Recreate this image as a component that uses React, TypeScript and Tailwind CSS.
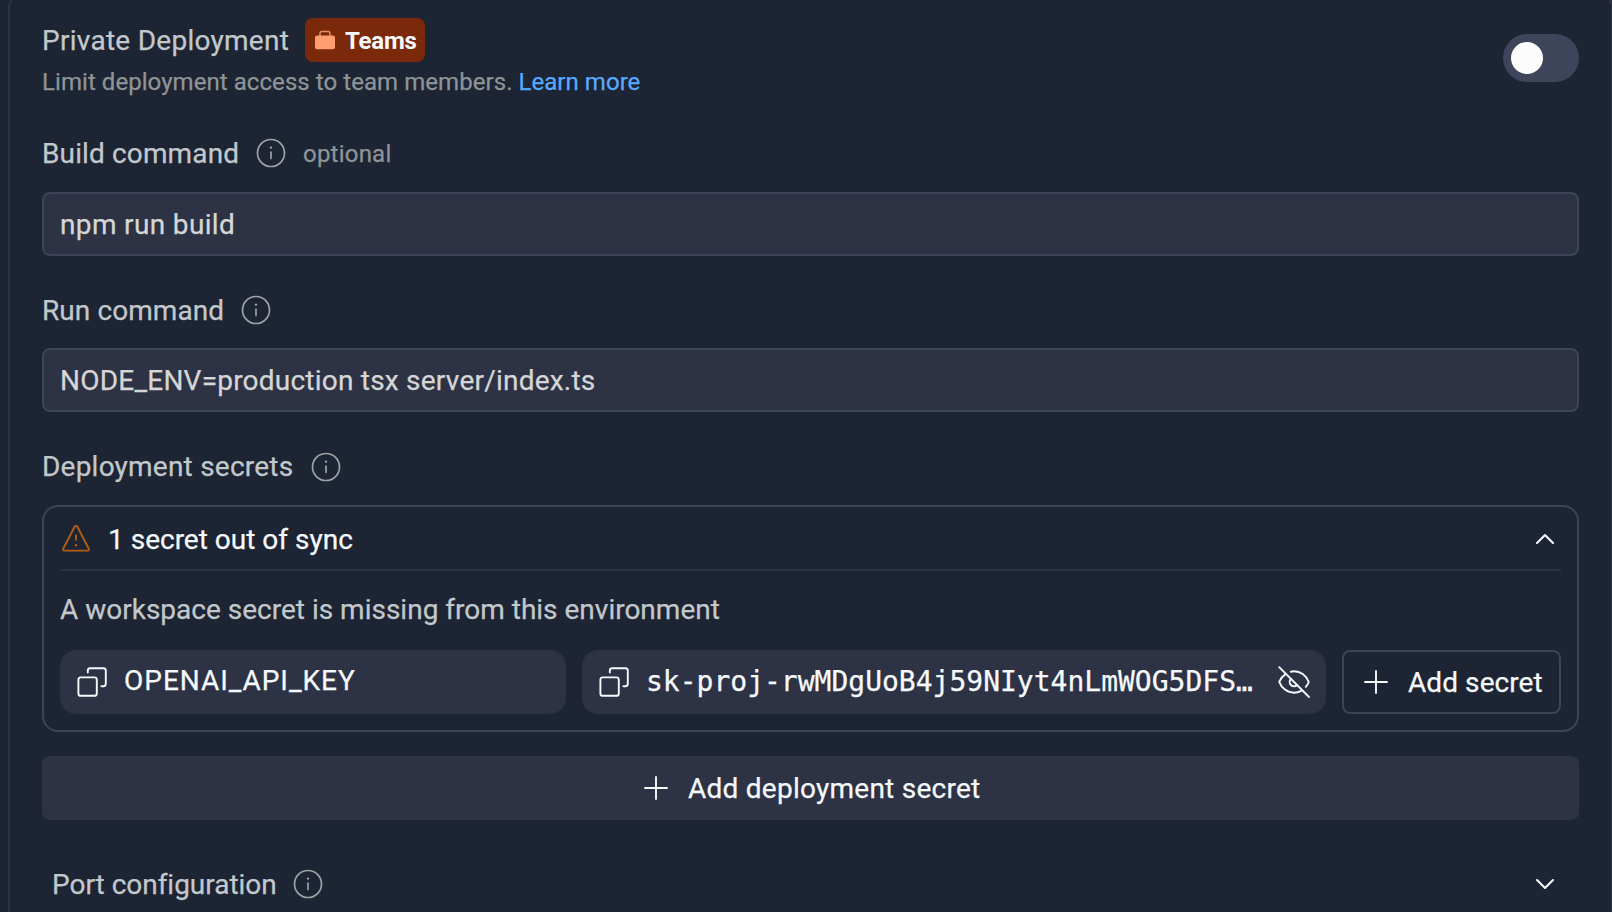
import type { ReactNode } from "react";

type IconProps = { className?: string };

function Icon({ className = "", children, stroke = 1.9 }: IconProps & { children: ReactNode; stroke?: number }) {
  return (
    <svg
      viewBox="0 0 32 32"
      fill="none"
      stroke="currentColor"
      strokeWidth={stroke}
      strokeLinecap="round"
      strokeLinejoin="round"
      className={`size-8 shrink-0 ${className}`}
      aria-hidden="true"
    >
      {children}
    </svg>
  );
}

function InfoIcon() {
  return (
    <Icon className="text-[#9da2a6]" stroke={1.7}>
      <circle cx="16" cy="16" r="13.5" />
      <path d="M16 15.2v6.3" />
      <circle cx="16" cy="10.6" r="1.2" fill="currentColor" stroke="none" />
    </Icon>
  );
}

function CopyIcon() {
  return (
    <Icon>
      <rect x="2.4" y="11.4" width="18.4" height="18.4" rx="2.4" />
      <path d="M11.8 6.6V4.6a2.4 2.4 0 0 1 2.4-2.4h13.2a2.4 2.4 0 0 1 2.4 2.4v13.2a2.4 2.4 0 0 1-2.4 2.4h-2" />
    </Icon>
  );
}

function PlusIcon() {
  return (
    <Icon>
      <path d="M16 5v22M5 16h22" />
    </Icon>
  );
}

function WarningIcon() {
  return (
    <Icon className="mt-0.5 text-[#b35c14]">
      <path d="M14.6 3.8 3.2 25.8a1.2 1.2 0 0 0 1 1.8h23.6a1.2 1.2 0 0 0 1-1.8L17.4 3.8a1.6 1.6 0 0 0-2.8 0Z" />
      <path d="M16 11.500v6" strokeLinecap="butt" />
      <circle cx="16" cy="22.2" r="1.3" fill="currentColor" stroke="none" />
    </Icon>
  );
}

function EyeOffIcon() {
  return (
    <Icon>
      <path d="M1.2 1.2 31 31" />
      <path d="M7.2 8.4C4.4 10.3 2.3 12.9 1.2 15.9c2.3 6.1 8 10.8 14.8 10.8 2.6 0 5-.6 7.1-1.8" />
      <path d="M12.8 5.7c1-.2 2.1-.4 3.2-.4 6.8 0 12.5 4.5 14.8 10.7-.7 1.8-1.7 3.4-3 4.8" />
      <path d="M12.9 12.8a4.4 4.4 0 1 0 6.3 6.2" />
    </Icon>
  );
}

function BriefcaseIcon() {
  return (
    <svg viewBox="0 0 24 24" className="size-6 shrink-0 text-[#ff9e70]" aria-hidden="true">
      <rect x="2" y="7.600" width="20" height="13.600" rx="2" fill="currentColor" />
      <path
        d="M7 8V5.400A1.800 1.800 0 0 1 8.800 3.600h6.400A1.800 1.800 0 0 1 17 5.400V8"
        fill="none"
        stroke="currentColor"
        strokeWidth="1.5"
        opacity="0.85"
      />
    </svg>
  );
}

function Chevron({ up = false }: { up?: boolean }) {
  return (
    <Icon className="text-[#f5f9fc]" stroke={2.1}>
      <path d={up ? "M8 21 16 13l8 8" : "M8 12 16 20l8-8"} />
    </Icon>
  );
}

function Label({ children, text, aside }: { children: ReactNode; text: string; aside?: ReactNode }) {
  return (
    <div className="flex h-8 items-center gap-4 whitespace-nowrap">
      <span className={`text-[#c2c8cc] ${text}`}>{children}</span>
      <InfoIcon />
      {aside}
    </div>
  );
}

function Field({ children }: { children: ReactNode }) {
  return (
    <div className="flex h-16 items-center rounded-lg border-2 border-[#3c445a] bg-[#2d3245] px-4 pt-0.5 text-[#d6d6d6]">
      {children}
    </div>
  );
}

export default function App() {
  return (
    <main className="h-[912px] w-full overflow-hidden bg-[#1d2433] font-['Roboto','Noto_Sans',sans-serif] text-[28px] leading-8 text-[#f5f9fc] [-webkit-text-stroke:0.25px]">
      <section className="-mt-2 ml-2 h-[960px] w-[1605px] rounded-2xl border-2 border-[#2d3245] px-8">
        <header className="flex justify-between pt-6">
          <div>
            <div className="flex h-11 items-center gap-4">
              <h1 className="w-[247px] whitespace-nowrap pt-0.5 tracking-[0.27px] text-[#c2c8cc]">Private Deployment</h1>
              <span className="flex h-11 w-[120px] items-center gap-2 rounded-lg bg-[#7a2a0b] px-2">
                <BriefcaseIcon />
                <span className="pt-0.5 text-2xl font-bold tracking-[-0.2px] [-webkit-text-stroke:0]">Teams</span>
              </span>
            </div>
            <p className="pt-0.5 text-2xl leading-9 tracking-[0.06px] text-[#8f9497]">
              Limit deployment access to team members.{" "}
              <a className="tracking-[0.04px] text-[#57abff]">Learn more</a>
            </p>
          </div>
          <button
            type="button"
            role="switch"
            aria-checked="false"
            className="mt-4 flex h-12 w-[76px] items-center rounded-full bg-[#3e455a] p-2"
          >
            <span className="size-8 rounded-full bg-[#fcfcfc]" />
          </button>
        </header>

        <div className="mt-[37px]">
          <Label
            text="w-[197px] pt-0.5 tracking-[0.13px]"
            aside={<span className="pt-0.5 text-2xl tracking-[0.22px] text-[#8f9497]">optional</span>}
          >
            Build command
          </Label>
          <div className="mt-[23px]">
            <Field>
              <span className="tracking-[0.35px]">npm run build</span>
            </Field>
          </div>
        </div>

        <div className="mt-[38px]">
          <Label text="w-[182px] pt-0.5 tracking-[0.08px]">Run command</Label>
          <div className="mt-[22px]">
            <Field>
              <span className="tracking-[0.22px]">NODE_ENV=production tsx server/index.ts</span>
            </Field>
          </div>
        </div>

        <div className="mt-[39px]">
          <Label text="w-[252px] tracking-[0.22px]">Deployment secrets</Label>
          <div className="mt-[22px] h-[227px] rounded-2xl border-2 border-[#3c445a] px-4">
            <div className="flex h-16 items-center gap-4 border-b-2 border-[#2d3245]">
              <WarningIcon />
              <span className="flex-1 pt-[3px]">1 secret out of sync</span>
              <Chevron up />
            </div>
            <p className="mt-[23px] text-[#c2c8cc]">A workspace secret is missing from this environment</p>
            <div className="mt-6 flex gap-4">
              <div className="flex h-16 w-[506px] items-center gap-4 rounded-2xl bg-[#2d3245] px-4">
                <CopyIcon />
                <span className="pb-0.5 tracking-[0.98px]">OPENAI_API_KEY</span>
              </div>
              <div className="flex h-16 w-[744px] items-center rounded-2xl bg-[#2d3245] px-4">
                <CopyIcon />
                <span className="ml-4 flex-1 whitespace-nowrap font-['DejaVu_Sans_Mono',monospace]">
                  sk-proj-rwMDgUoB4j59NIyt4nLmWOG5DFS…
                </span>
                <EyeOffIcon />
              </div>
              <button
                type="button"
                className="flex h-16 w-[219px] items-center gap-4 whitespace-nowrap rounded-lg border-2 border-[#3c445a] px-4"
              >
                <PlusIcon />
                <span className="pt-0.5 tracking-[0.08px]">Add secret</span>
              </button>
            </div>
          </div>
          <button
            type="button"
            className="mt-6 flex h-16 w-full items-center justify-center gap-4 rounded-lg bg-[#2d3245]"
          >
            <PlusIcon />
            <span className="w-[293px] whitespace-nowrap pt-0.5 text-left tracking-[0.25px]">Add deployment secret</span>
          </button>
        </div>

        <div className="mt-12 flex items-center justify-between pl-2.5 pr-[18px]">
          <Label text="w-[224px] pt-0.5 tracking-[-0.02px]">Port configuration</Label>
          <Chevron />
        </div>
      </section>
    </main>
  );
}
